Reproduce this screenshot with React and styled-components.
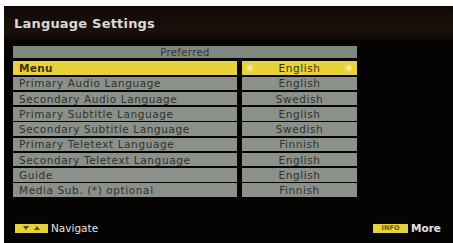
import React from 'react'
import styled, { createGlobalStyle } from 'styled-components'

const Global = createGlobalStyle`
  html, body {
    margin: 0;
    padding: 0;
    background: #fff;
  }
  body {
    font-family: "DejaVu Sans", Verdana, sans-serif;
  }
`

const Screen = styled.div`
  margin: 6px 0 0 4px;
  width: 449px;
  height: 237px;
  background: #060303;
  display: flex;
  flex-direction: column;
`

const TitleBar = styled.div`
  height: 34px;
  padding-left: 10px;
  display: flex;
  align-items: center;
  background: linear-gradient(#0e0806, #1a110b 70%, #0d0805);
  color: #dcd8d4;
  font-size: 13px;
  font-weight: bold;
  letter-spacing: 0.2px;
`

const Content = styled.div`
  padding: 6px 0 0 9px;
`

const Table = styled.div`
  width: 344px;
  display: flex;
  flex-direction: column;
  gap: 1.75px;
`

const HeaderRow = styled.div`
  height: 12px;
  margin-bottom: 1.5px;
  background: #80877f;
  color: #333633;
  font-size: 10px;
  letter-spacing: 0.4px;
  display: flex;
  align-items: center;
  justify-content: center;
`

const Row = styled.div`
  display: grid;
  grid-template-columns: 224px 115px;
  column-gap: 5px;
  height: 13.5px;
`

const Cell = styled.div`
  background: ${p => (p.$active ? '#e8d23a' : '#8b908a')};
  color: ${p => (p.$active ? '#3e3208' : '#2f322f')};
  font-size: 10.5px;
  font-weight: ${p => (p.$active && !p.$center ? 'bold' : 'normal')};
  letter-spacing: ${p => (p.$active && !p.$center ? '0.3px' : '0.6px')};
  display: flex;
  align-items: center;
  justify-content: ${p => (p.$center ? 'center' : 'flex-start')};
  padding-left: ${p => (p.$center ? '0' : '6px')};
  position: relative;
  white-space: nowrap;
`

const Dot = styled.span`
  position: absolute;
  top: 50%;
  ${p => (p.$right ? 'right: 6px;' : 'left: 6px;')}
  width: 4px;
  height: 4px;
  margin-top: -2px;
  border-radius: 50%;
  background: #f6eca0;
  box-shadow: 0 0 3px 1px #f4e690;
`

const Footer = styled.div`
  margin-top: auto;
  padding: 0 12px 9px 11px;
  display: flex;
  align-items: center;
  justify-content: space-between;
`

const Hint = styled.div`
  display: flex;
  align-items: center;
  gap: 3px;
  color: #e4e2e2;
  font-size: 10.5px;
  font-weight: ${p => (p.$bold ? 'bold' : 'normal')};
`

const Key = styled.span`
  width: ${p => p.$w}px;
  height: 9px;
  background: #e6d23a;
  display: flex;
  align-items: center;
  justify-content: center;
  gap: 5px;
  color: #6a5a10;
  font-size: 6.5px;
  font-weight: bold;
`

const rows = [
  ['Menu', 'English'],
  ['Primary Audio Language', 'English'],
  ['Secondary Audio Language', 'Swedish'],
  ['Primary Subtitle Language', 'English'],
  ['Secondary Subtitle Language', 'Swedish'],
  ['Primary Teletext Language', 'Finnish'],
  ['Secondary Teletext Language', 'English'],
  ['Guide', 'English'],
  ['Media Sub. (*) optional', 'Finnish'],
]

export default function App() {
  return (
    <>
      <Global />
      <Screen>
        <TitleBar>Language Settings</TitleBar>
        <Content>
          <Table>
            <HeaderRow>Preferred</HeaderRow>
            {rows.map(([label, value], i) => (
              <Row key={label}>
                <Cell $active={i === 0}>{label}</Cell>
                <Cell $active={i === 0} $center>
                  {i === 0 && <Dot />}
                  {value}
                  {i === 0 && <Dot $right />}
                </Cell>
              </Row>
            ))}
          </Table>
        </Content>
        <Footer>
          <Hint>
            <Key $w={33}>
              <svg width="6" height="4" viewBox="0 0 6 4"><path d="M0 0h6L3 4z" fill="#5a4a0c" /></svg>
              <svg width="6" height="4" viewBox="0 0 6 4"><path d="M0 4h6L3 0z" fill="#5a4a0c" /></svg>
            </Key>
            Navigate
          </Hint>
          <Hint $bold>
            <Key $w={35}>INFO</Key>
            More
          </Hint>
        </Footer>
      </Screen>
    </>
  )
}
